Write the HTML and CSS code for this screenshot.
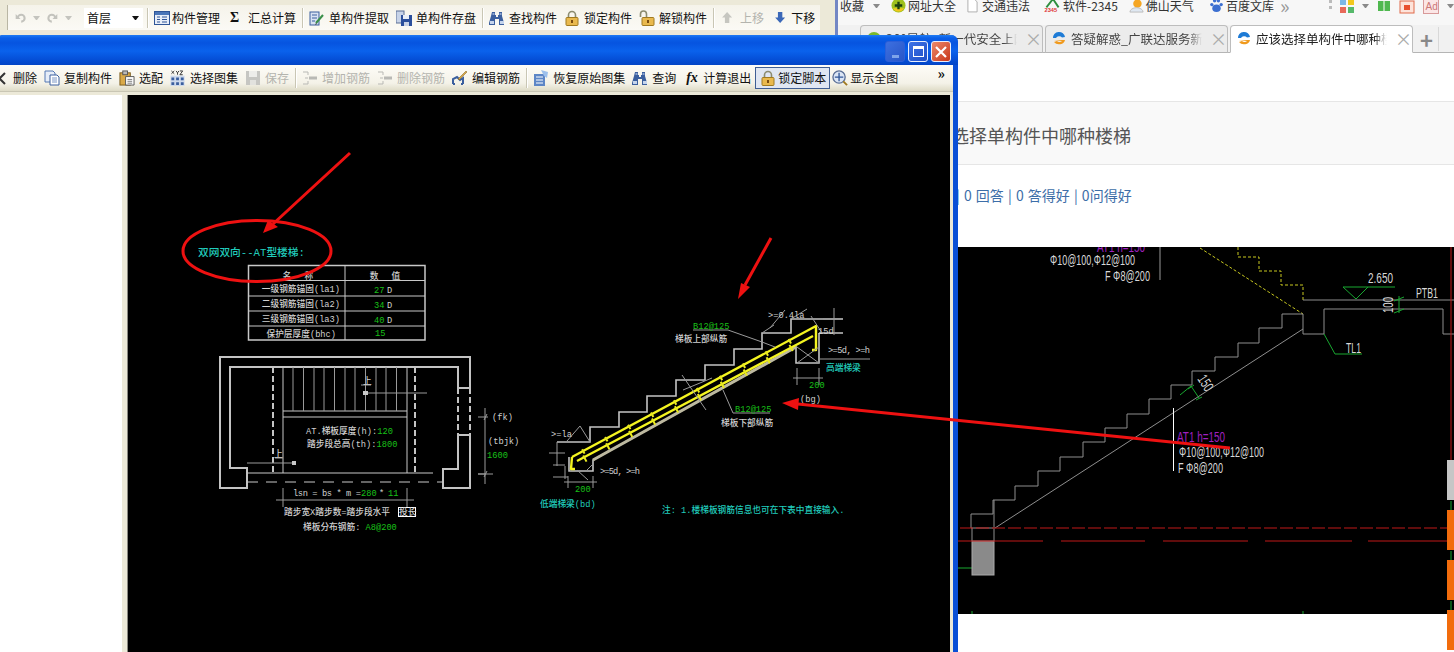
FILE: index.html
```html
<!DOCTYPE html>
<html lang="zh-CN">
<head>
<meta charset="utf-8">
<title>楼梯图集</title>
<link rel="stylesheet" href="styles.css">
</head>
<body>
<svg class="defs" aria-hidden="true">
  <defs>
    <symbol id="i-bino" viewBox="0 0 16 16"><path d="M3 2h3v3h1v2h2V5h1V2h3v4l2 7v2H10V9H6v6H0v-2l2-7z" fill="#3b5f9e"/><path d="M1 11h4v3H1zM11 11h4v3h-4z" fill="#c5d4ec"/><path d="M3.500 3h2v2h-2zM10.500 3h2v2h-2z" fill="#8aa3cf"/></symbol>
    <symbol id="i-lock" viewBox="0 0 16 16"><path d="M4.500 8V5a3.500 3.500 0 0 1 7 0v3" fill="none" stroke="#8b8b6f" stroke-width="1.600"/><rect x="2" y="7.500" width="12" height="8" rx="1" fill="#e9b94e" stroke="#a07a20"/><path d="M7 10h2v3H7z" fill="#7a4c10"/></symbol>
    <symbol id="i-unlock" viewBox="0 0 16 16"><path d="M1.500 7V4a3 3 0 0 1 6 0v3" fill="none" stroke="#8b8b6f" stroke-width="1.600"/><rect x="3" y="7.500" width="12" height="8" rx="1" fill="#e9b94e" stroke="#a07a20"/><path d="M8 10h2v3H8z" fill="#7a4c10"/></symbol>
    <symbol id="i-table" viewBox="0 0 16 16"><rect x=".5" y="1.500" width="15" height="13" fill="#e8eef8" stroke="#2f5597"/><path d="M1 2h14v3H1z" fill="#4a76b8"/><path d="M3 7h3M3 9.500h3M3 12h3M8 7h5M8 9.500h5M8 12h5" stroke="#2f5597"/></symbol>
    <symbol id="i-extract" viewBox="0 0 16 16"><rect x="1" y="2" width="9" height="13" fill="#d8e2f2" stroke="#3b5f9e"/><path d="M3 5h5M3 8h5M3 11h3" stroke="#3b5f9e"/><path d="M7 13l7-8" stroke="#3a8f4a" stroke-width="2"/><path d="M6 15l2-1-1-1z" fill="#333"/></symbol>
    <symbol id="i-store" viewBox="0 0 16 16"><rect x="0" y="1" width="8" height="12" fill="#c7d3e8" stroke="#5a6f96"/><path d="M5 5h11v11H5z" fill="#2b4f9c"/><path d="M7 5h6v4H7z" fill="#e8eef8"/><path d="M8 12h5v4H8z" fill="#c9d3e6"/></symbol>
    <symbol id="i-copy" viewBox="0 0 16 16"><path d="M1 1h8l2 2v9H1z" fill="#e6edf8" stroke="#5578b4"/><path d="M6 5h7l2 2v8H6z" fill="#fff" stroke="#3b5f9e"/><path d="M8 8h5M8 10h5M8 12h5" stroke="#7d97c6"/></symbol>
    <symbol id="i-match" viewBox="0 0 17 17"><rect x="1" y="3" width="11" height="13" fill="#d9a948" stroke="#7a5a1a"/><rect x="4" y="1" width="5" height="4" fill="#b9b9b9" stroke="#555"/><path d="M7 7h9v9H7z" fill="#fff" stroke="#555"/><path d="M9 10h5M9 12h5M9 14h5" stroke="#777"/></symbol>
    <symbol id="i-xyz" viewBox="0 0 16 17"><path d="M0 6h15v11H0z" fill="#cdd9ec"/><path d="M1 8h3v3H1zM6 8h3v3H6zM11 8h3v3h-3zM1 13h3v3H1zM6 13h3v3H6zM11 13h3v3h-3z" fill="#3b5f9e"/><path d="M1 1l3 3M4 1L1 4M6 1l1.500 2L9 1M7.500 3v2M10 1h3l-3 4h3" stroke="#333" fill="none"/></symbol>
    <symbol id="i-save" viewBox="0 0 16 16"><path d="M1 1h14v14H1z" fill="#c6c6c2"/><path d="M4 1h8v6H4z" fill="#ededea"/><path d="M5 10h6v5H5z" fill="#e2e2de"/></symbol>
    <symbol id="i-addbar" viewBox="0 0 16 16"><path d="M1 2h5v3M1 14h5v-3M3 8h3" fill="none" stroke="#b9b9b5"/><path d="M7 8h8" stroke="#b9b9b5" stroke-width="3"/></symbol>
    <symbol id="i-edit" viewBox="0 0 16 16"><path d="M1 14V9l4-2 3 3 3-2v6M1 14h2M9 14h2" fill="none" stroke="#3b5f9e" stroke-width="2"/><path d="M6 9l8-8 1 1-8 8z" fill="#d9a948" stroke="#7a5a1a" stroke-width=".5"/></symbol>
    <symbol id="i-restore" viewBox="0 0 16 16"><path d="M1 4h11v12H1z" fill="#5d86c6"/><path d="M3 7h7M3 10h7M3 13h7" stroke="#fff"/><path d="M8 0l7 2-1 6-3-2z" fill="#9dc0ec"/></symbol>
    <symbol id="i-zoom" viewBox="0 0 17 17"><circle cx="7.500" cy="7.500" r="6.500" fill="#dce6f5" stroke="#5a6f96" stroke-width="1.400"/><path d="M7.500 3v9M3 7.500h9" stroke="#2f5597" stroke-width="1.400"/><path d="M12 12l4 4" stroke="#a07a20" stroke-width="2"/></symbol>
    <symbol id="i-ie" viewBox="0 0 16 16"><path d="M2 7a6 5.500 0 0 1 12-1l-3 .5a3.500 3 0 0 0-6 .5z" fill="#1e7bd6"/><path d="M3 9h11a6 5 0 0 1-11 2l3-1a3 2.500 0 0 0 5 0z" fill="#f09a1e"/></symbol>
  </defs>
</svg>

<main class="desktop">
  <section class="app-window">
    <div class="app-bar">
      <svg class="ico w11" viewBox="0 0 16 16"><path d="M4 9a5 5 0 1 1 5 5" fill="none" stroke="#c3c3bd" stroke-width="3"/><path d="M1 3v7h7z" fill="#c3c3bd"/></svg>
      <span class="caret grey"></span>
      <svg class="ico w11 flip" viewBox="0 0 16 16"><path d="M4 9a5 5 0 1 1 5 5" fill="none" stroke="#c3c3bd" stroke-width="3"/><path d="M1 3v7h7z" fill="#c3c3bd"/></svg>
      <span class="caret grey"></span>
      <div class="combo"><span>首层</span><span class="caret dark"></span></div>
      <span class="sep"></span>
      <div class="tool tight"><svg class="ico"><use href="#i-table"/></svg><span>构件管理</span></div>
      <div class="tool wide"><span class="sigma">Σ</span><span>汇总计算</span></div>
      <span class="sep"></span>
      <div class="tool"><svg class="ico"><use href="#i-extract"/></svg><span>单构件提取</span></div>
      <div class="tool"><svg class="ico"><use href="#i-store"/></svg><span>单构件存盘</span></div>
      <span class="sep"></span>
      <div class="tool"><svg class="ico"><use href="#i-bino"/></svg><span>查找构件</span></div>
      <div class="tool"><svg class="ico"><use href="#i-lock"/></svg><span>锁定构件</span></div>
      <div class="tool"><svg class="ico"><use href="#i-unlock"/></svg><span>解锁构件</span></div>
      <span class="sep"></span>
      <div class="tool disabled wide move-up"><span class="arrow-ico up"></span><span>上移</span></div>
      <div class="tool wide move-down"><span class="arrow-ico down"></span><span>下移</span></div>
    </div>
  </section>

  <section class="browser">
    <div class="fav-bar">
      <span class="fav first">收藏</span><span class="caret grey2"></span>
      <span class="fav"><svg class="ico" viewBox="0 0 16 16"><circle cx="8" cy="8" r="7.500" fill="#9fc11e"/><path d="M2 11a7 7 0 0 0 12 0z" fill="#f2c81e"/><path d="M8 4v8M4 8h8" stroke="#1c3f10" stroke-width="2.500"/></svg>网址大全</span>
      <span class="fav"><svg class="ico doc" viewBox="0 0 12 16"><path d="M1 1h7l3 3v11H1z" fill="#fff" stroke="#aaa"/></svg>交通违法</span>
      <span class="fav soft"><svg class="ico" viewBox="0 0 17 16"><path d="M2 10L9 1l6 9" fill="none" stroke="#2f8f3f" stroke-width="2"/><text x="0" y="15" class="tiny-2345">2345</text></svg>软件-2345</span>
      <span class="fav weather"><svg class="ico" viewBox="0 0 16 16"><circle cx="9" cy="6" r="4.500" fill="#f5a623"/><path d="M1 15a6 4 0 0 1 14 0z" fill="#dfe8f2" stroke="#bbb"/></svg>佛山天气</span>
      <span class="fav last"><svg class="ico" viewBox="0 0 16 16"><ellipse cx="8" cy="11" rx="4.500" ry="4" fill="#3b6fd1"/><circle cx="3" cy="7" r="1.800" fill="#3b6fd1"/><circle cx="13" cy="7" r="1.800" fill="#3b6fd1"/><circle cx="6" cy="3" r="1.800" fill="#3b6fd1"/><circle cx="10" cy="3" r="1.800" fill="#3b6fd1"/></svg>百度文库</span>
      <span class="more">»</span>
      <div class="fav-tools">
        <span class="dots"></span>
        <svg class="ico w14" viewBox="0 0 14 14"><path d="M0 0h6v6H0z" fill="#7db8e8"/><path d="M8 0h6v6H8z" fill="#f2c81e"/><path d="M0 8h6v6H0z" fill="#e86a5a"/><path d="M8 8h6v6H8z" fill="#56b96b"/></svg>
        <span class="caret grey2"></span>
        <svg class="ico w14" viewBox="0 0 14 14"><path d="M1 2h12v10H1z" fill="#4fb84f"/><path d="M7 2v10" stroke="#fff"/></svg>
        <svg class="ico" viewBox="0 0 16 16"><rect x="1" y="3" width="14" height="12" fill="#fde3da" stroke="#e06a4a"/><rect x="5" y="7" width="6" height="5" fill="#e8502f"/></svg>
        <svg class="ico" viewBox="0 0 16 16"><rect x=".5" y="1.500" width="15" height="14" fill="#fbe6e6" stroke="#d89a9a"/><text x="2.500" y="12" class="tiny-ad">Ad</text></svg>
        <span class="caret grey2"></span>
      </div>
    </div>
    <div class="tab-strip">
      <div class="tab"><svg class="ico" viewBox="0 0 16 16"><circle cx="8" cy="8" r="7" fill="#79b82a"/><circle cx="8" cy="8" r="3.500" fill="#f2c81e"/></svg><span class="tab-label">360导航_新一代安全上网导航</span><span class="tab-x">×</span></div>
      <div class="tab"><svg class="ico"><use href="#i-ie"/></svg><span class="tab-label">答疑解惑_广联达服务新手</span><span class="tab-x">×</span></div>
      <div class="tab active"><svg class="ico"><use href="#i-ie"/></svg><span class="tab-label">应该选择单构件中哪种楼梯</span><span class="tab-x">×</span></div>
      <span class="tab-plus">+</span>
      <span class="tab-divider"></span>
    </div>
    <div class="page">
      <h1 class="q-title">应该选择单构件中哪种楼梯</h1>
      <p class="q-stats">1 提问 | 0 回答 | 0 答得好 | 0问得好</p>
      <svg class="shot" viewBox="838 246 616 367" role="img" aria-label="楼梯结构施工图">
        <rect x="838" y="246" width="616" height="367" class="bg-black"/>
        <path d="M1238 246v10h21v14h22v14h22v15" class="l-yellow dash"/>
        <path d="M1200 247l103 66" class="l-yellow dash"/>
        <path d="M1303 299h151M1303 313h-21v14h-23v15h-21v14h-23v14h-23v14h-21v14h-22v15h-22v14h-22v14h-22v15h-23v14h-22v15h-23v14h-22v14h-22v14h22M994 499v41M972 527v13" class="l-grey"/>
        <path d="M995 527l308-199M1303 313v20h21v-25h119v25h11" class="l-grey"/>
        <path d="M1160 246v33" class="l-mid"/>
        <path d="M1173.500 407v63" class="l-white"/>
        <path d="M1343 286h52M1343 286l13 12 12-12" class="l-green"/>
        <path d="M1399 295v17M1394 300l10-4M1394 312l10-4" class="l-green"/>
        <path d="M1324 333l11 20h27" class="l-green"/>
        <path d="M1180 394l11-9 8 12M1188 388l6-4M1196 399l6-3" class="l-green"/>
        <path d="M958 567h15" class="l-green"/>
        <path d="M972 610v3M1303 610v3" class="l-green"/>
        <path d="M1451 246v214" class="l-red"/>
        <path d="M1451 500v10M1451 550v10M1451 600v13" class="l-green"/>
        <rect x="972" y="540" width="22" height="34" class="block"/>
        <path d="M960 527h487" class="l-red dash-long"/>
        <path d="M958 540h85M1061 540h84M1163 540h85M1265 540h87M1368 540h79" class="l-red"/>
        <text x="1097" y="251" class="cad-n purple" textLength="48" lengthAdjust="spacingAndGlyphs">AT1 h=150</text>
        <text x="1050" y="264" class="cad-n" textLength="85" lengthAdjust="spacingAndGlyphs">Φ10@100,Φ12@100</text>
        <text x="1105" y="280" class="cad-n" textLength="45" lengthAdjust="spacingAndGlyphs">F Φ8@200</text>
        <text x="1177" y="441" class="cad-n purple" textLength="48" lengthAdjust="spacingAndGlyphs">AT1 h=150</text>
        <text x="1179" y="456" class="cad-n" textLength="85" lengthAdjust="spacingAndGlyphs">Φ10@100,Φ12@100</text>
        <text x="1178" y="472" class="cad-n" textLength="45" lengthAdjust="spacingAndGlyphs">F Φ8@200</text>
        <text x="1368" y="282" class="cad-n" textLength="25" lengthAdjust="spacingAndGlyphs">2.650</text>
        <text x="1416" y="297" class="cad-n" textLength="22" lengthAdjust="spacingAndGlyphs">PTB1</text>
        <text x="1346" y="352" class="cad-n" textLength="15" lengthAdjust="spacingAndGlyphs">TL1</text>
        <text class="cad-n" transform="translate(1393 312) rotate(-90)" textLength="16" lengthAdjust="spacingAndGlyphs">100</text>
        <text class="cad-n" transform="translate(1197 378) rotate(57)" textLength="16" lengthAdjust="spacingAndGlyphs">150</text>
      </svg>
    </div>
    <div class="side-rail">
      <span class="rail-block grey"></span>
      <span class="rail-block"></span>
      <span class="rail-block"></span>
      <span class="rail-block"></span>
    </div>
  </section>

  <section class="dialog">
    <header class="titlebar">
      <button class="win-btn min"><span class="min-bar"></span></button>
      <button class="win-btn max"><span class="max-box"></span></button>
      <button class="win-btn close">
        <svg viewBox="0 0 12 12" class="close-x"><path d="M1 1l10 10M11 1L1 11"/></svg>
      </button>
    </header>
    <div class="dialog-inner">
      <div class="dlg-bar">
        <div class="tool clip"><svg class="ico" viewBox="0 0 16 16"><path d="M1 3l11 11M12 3L1 14" stroke="#333" stroke-width="2"/></svg><span>删除</span></div>
        <div class="tool"><svg class="ico"><use href="#i-copy"/></svg><span>复制构件</span></div>
        <div class="tool"><svg class="ico"><use href="#i-match"/></svg><span>选配</span></div>
        <div class="tool"><svg class="ico"><use href="#i-xyz"/></svg><span>选择图集</span></div>
        <div class="tool disabled"><svg class="ico"><use href="#i-save"/></svg><span>保存</span></div>
        <span class="sep"></span>
        <div class="tool disabled"><svg class="ico"><use href="#i-addbar"/></svg><span>增加钢筋</span></div>
        <div class="tool disabled"><svg class="ico"><use href="#i-addbar"/></svg><span>删除钢筋</span></div>
        <div class="tool"><svg class="ico"><use href="#i-edit"/></svg><span>编辑钢筋</span></div>
        <span class="sep"></span>
        <div class="tool"><svg class="ico"><use href="#i-restore"/></svg><span>恢复原始图集</span></div>
        <div class="tool"><svg class="ico"><use href="#i-bino"/></svg><span>查询</span></div>
        <div class="tool"><span class="fx">fx</span><span>计算退出</span></div>
        <div class="tool pressed"><svg class="ico"><use href="#i-lock"/></svg><span>锁定脚本</span></div>
        <div class="tool tight"><svg class="ico"><use href="#i-zoom"/></svg><span>显示全图</span></div>
        <span class="chevrons">»</span>
      </div>
      <div class="dlg-body">
        <aside class="tree"></aside>
        <div class="canvas">
          <svg class="cad" viewBox="128 95 822 557" role="img" aria-label="AT型楼梯配筋图">
            <text x="198" y="256" class="cad-t cyan big">双网双向--AT型楼梯:</text>
            <rect x="248.500" y="265.500" width="176.500" height="74.500" class="t-frame"/>
            <path d="M248 280.500h177M248 296h177M248 311h177M248 326h177M345 265v75" class="l-light"/>
            <text x="298" y="279" class="cad-t mid spread">名 称</text>
            <text x="385" y="279" class="cad-t mid spread">数 值</text>
            <text x="340" y="292" class="cad-t end">一级钢筋锚固(la1)</text>
            <text x="340" y="307" class="cad-t end">二级钢筋锚固(la2)</text>
            <text x="340" y="322" class="cad-t end">三级钢筋锚固(la3)</text>
            <text x="336" y="337" class="cad-t end">保护层厚度(bhc)</text>
            <text x="374" y="293" class="cad-t green">27</text><text x="387" y="293" class="cad-t">D</text>
            <text x="374" y="308" class="cad-t green">34</text><text x="387" y="308" class="cad-t">D</text>
            <text x="374" y="323" class="cad-t green">40</text><text x="387" y="323" class="cad-t">D</text>
            <text x="375" y="336" class="cad-t green">15</text>
            <path d="M458 388v-21H230v101h17v20h-27V357h250v31h-12M458 435v34h-15v19h27v-53z" class="l-wall"/>
            <path d="M458 388v47M470 388v47" class="l-wall dash-wall"/>
            <path d="M273 367v106M415 367v106" class="l-wall dash-wall"/>
            <path d="M283 367v106M407 367v106M283 411h124M283 417h124M247 473h186" class="l-light"/>
            <path d="M293 367v44M303.500 367v44M314 367v44M324 367v44M334.500 367v44M345 367v44M355 367v44M365.500 367v44M376 367v44M386 367v44M396.500 367v44" class="l-mid"/>
            <path d="M247 482h196" class="l-light dash-mid"/>
            <path d="M366 393h61M247 463h49M361 385h10M275 458h8" class="l-mid"/>
            <path d="M363 391h5v4h-5zM292 461h4v4h-4z" class="fill-light"/>
            <text x="363" y="384" class="cad-t">上</text>
            <text x="274" y="457" class="cad-t">上</text>
            <path d="M485 408v76M478 417h10M485 474h-7h15M484 420l3-6M484 477l3-6" class="l-mid"/>
            <text x="492" y="420" class="cad-t">(fk)</text>
            <text x="488" y="444" class="cad-t">(tbjk)</text>
            <text x="487" y="458" class="cad-t green">1600</text>
            <text x="306" y="434" class="cad-t">AT.梯板厚度(h):<tspan class="green">120</tspan></text>
            <text x="307" y="447" class="cad-t">踏步段总高(th):<tspan class="green">1800</tspan></text>
            <text x="293" y="496" class="cad-t" textLength="68">lsn = bs * m =</text>
            <text x="361" y="496" class="cad-t green">280</text>
            <text x="379" y="496" class="cad-t">*</text>
            <text x="388" y="496" class="cad-t green">11</text>
            <path d="M276 500h138M283 488v19M407 488v19" class="l-mid"/>
            <text x="284" y="515" class="cad-t">踏步宽X踏步数=踏步段水平</text>
            <rect x="398.500" y="507.500" width="17" height="9" class="box"/>
            <text x="399" y="515" class="cad-t">投长</text>
            <text x="303" y="530" class="cad-t">梯板分布钢筋:<tspan class="green"> A8@200</tspan></text>
            <path d="M557 442h33v-15h29v-15h28v-16h29v-16h29v-15h29v-16h28v-16h29v-14h52M819 333h24" class="l-wall thin"/>
            <path d="M569 457v14h24v-11l203-113v16h23v-30" class="l-wall thin"/>
            <path d="M593 460l203-113" class="l-beige"/>
            <path d="M572 457l244-131v24h-4M577 461l236-125M572 457l-1 12h4" class="rebar"/>
            <path d="M584 459l222-119" class="rebar-ticks"/>
            <path d="M571 458l240-128" class="rebar-ticks off"/>
            <path d="M728 330l34 12 13 5M723 390l10 23h37M693 330h35" class="l-mid"/>
            <path d="M683 390l29-12M682 375l24 35" class="l-mid"/>
            <path d="M762 333l12-8M785 310l-15 18M791 319l16-10M811 316l11 17M834 308v27M823 319h20M797 347l22 16M797 363l22-16M819 359h51" class="l-mid"/>
            <path d="M557 442v24M549 453h16M553 465h12M553 477h15M565 466v13M567 441l13-15 10 16" class="l-mid"/>
            <path d="M793 378h30M797 368v17M819 368v17M564 482h33M568 476v12M593 476v12M593 464l-6 6M577 470l11 10" class="l-mid"/>
            <text x="693" y="329" class="cad-t green">B12@125</text>
            <text x="675" y="342" class="cad-t">梯板上部纵筋</text>
            <text x="735" y="412" class="cad-t green">B12@125</text>
            <text x="721" y="426" class="cad-t">梯板下部纵筋</text>
            <text x="768" y="318" class="cad-t">&gt;=0.4la</text>
            <text x="818" y="334" class="cad-t">15d</text>
            <text x="828" y="353" class="cad-t" textLength="42">&gt;=5d, &gt;=h</text>
            <text x="826" y="371" class="cad-t cyan">高端梯梁</text>
            <text x="809" y="388" class="cad-t green">200</text>
            <text x="800" y="402" class="cad-t">(bg)</text>
            <text x="551" y="437" class="cad-t">&gt;=la</text>
            <text x="600" y="474" class="cad-t" textLength="40">&gt;=5d, &gt;=h</text>
            <text x="575" y="492" class="cad-t green">200</text>
            <text x="540" y="507" class="cad-t cyan">低端梯梁(bd)</text>
            <text x="662" y="513" class="cad-t cyan">注: 1.楼梯板钢筋信息也可在下表中直接输入.</text>
          </svg>
        </div>
      </div>
    </div>
  </section>

  <svg class="annotations" viewBox="0 0 1454 652" aria-hidden="true">
    <ellipse cx="257" cy="251" rx="74" ry="30.500" class="a-line"/>
    <path d="M350 153l-77 71M771 238l-26 47M1230 448l-432-44" class="a-line"/>
    <path d="M263 233l5-13 10 7zM738 299l3-16 9 4zM782 403l17-5-1 12z" class="a-head"/>
  </svg>
</main>
</body>
</html>
```

FILE: styles.css
```css
* { box-sizing: border-box; }
html, body { margin: 0; height: 100%; }
body {
  overflow: hidden;
  background: #fff;
  font-family: "Noto Sans CJK SC", "Liberation Sans", sans-serif;
  font-size: 12px;
  color: #111;
}
.defs { position: absolute; width: 0; height: 0; }
.desktop { position: relative; width: 1454px; height: 652px; overflow: hidden; }

/* shared toolbar parts */
.ico { flex: none; width: 16px; height: 16px; display: block; }
.w11 { width: 11px; height: 13px; }
.w14 { width: 14px; height: 14px; }
.flip { transform: scaleX(-1); }
.tool { display: flex; align-items: center; gap: 4px; flex: none; white-space: nowrap; line-height: 16px; }
.tool.tight { gap: 2px; }
.tool.wide { gap: 8px; }
.tool.disabled { color: #b4b4ae; }
.sep { flex: none; width: 1px; height: 20px; margin: 0 -1px; background: #c9c6b4; box-shadow: 1px 0 #fff; }
.caret { flex: none; box-sizing: content-box; width: 1px; height: 0; border: 3px solid transparent; border-bottom: 0; border-top: 4px solid #555; }
.caret.grey { border-top-color: #c4c4be; }
.caret.grey2 { border-top-color: #8a8a8a; }
.caret.dark { border-top-color: #111; }

/* application window */
.app-window {
  position: absolute; left: 0; top: 0; width: 835px; height: 36px;
  background: #ece9d8;
  padding-top: 5px;
}
.app-bar {
  margin-left: 7px; width: 813px; height: 25px;
  background: linear-gradient(#f5f3ea, #fbfaf5);
  border-left: 1px solid #b9b6a4;
  display: flex; align-items: center; gap: 7px; padding-left: 7px;
}
.combo { flex: none; width: 59px; height: 20px; margin: 0 -2px 0 5px; background: #fff; display: flex; align-items: center; justify-content: space-between; padding: 0 4px 0 3px; }
.sigma { font-family: "Liberation Serif", serif; font-weight: 700; font-size: 14px; width: 13px; padding-left: 3px; }
.arrow-ico { width: 10px; height: 11px; background: #3b68b8; clip-path: polygon(50% 100%, 100% 50%, 72% 50%, 72% 0, 28% 0, 28% 50%, 0 50%); }
.arrow-ico.up { background: #c6c6c0; transform: scaleY(-1); }
.move-up { margin-left: 2px; }
.tool.move-down { margin-left: 4px; gap: 6px; }

/* browser */
.browser {
  position: absolute; left: 835px; top: 0; width: 619px; height: 652px;
  background: #fff;
  border-left: 3px solid #7286c4;
  display: flex; flex-direction: column;
}
.fav-bar { height: 25px; flex: none; background: #f7f7f7; display: flex; align-items: center; padding: 0 0 14px 2px; color: #333; }
.fav { display: flex; align-items: center; gap: 2px; flex: none; margin-right: 11px; line-height: 12px; }
.fav.first { margin-right: 9px; }
.fav.soft { margin-left: 3px; margin-right: 11px; }
.fav.weather { margin-right: 15px; }
.fav.last { margin-right: 6px; }
.fav-bar > .caret { margin-right: 11px; }
.fav .ico { width: 15px; height: 15px; }
.fav .doc { width: 11px; margin-right: 2px; }
.fav.soft .ico { width: 17px; }
.tiny-2345 { font: 700 6px "Liberation Sans", sans-serif; fill: #d33; }
.tiny-ad { font: 10px "Liberation Sans", sans-serif; fill: #c77; }
.more { flex: none; width: 12px; color: #999; font-size: 20px; line-height: 10px; }
.fav-tools { display: flex; align-items: center; gap: 8px; margin-left: 37px; }
.dots { width: 3px; height: 12px; background: repeating-linear-gradient(#bbb 0 3px, transparent 3px 6px); }

.tab-strip { height: 28px; flex: none; background: #f1f1f1; border-bottom: 1px solid #b5b5b5; display: flex; align-items: flex-end; padding-left: 22px; gap: 2px; }
.tab { position: relative; top: 1px; width: 183px; height: 28px; display: flex; align-items: center; gap: 4px; padding: 0 5px; background: #ececec; border: 1px solid #bdbdbd; border-bottom: 1px solid #b5b5b5; border-radius: 4px 4px 0 0; color: #444; }
.tab .tab-label { flex: 1; min-width: 0; overflow: hidden; white-space: nowrap; -webkit-mask-image: linear-gradient(90deg, #000 90%, transparent); mask-image: linear-gradient(90deg, #000 90%, transparent); line-height: 14px; font-size: 12.500px; }
.tab-x { flex: none; color: #aaa; font-size: 17px; line-height: 14px; width: 12px; margin-left: 4px; text-align: center; }
.tab.active { background: #fff; border-bottom-color: #fff; color: #222; }
.tab-plus { color: #888; font-size: 22px; line-height: 25px; margin-left: 5px; font-weight: 600; }
.tab-divider { width: 1px; height: 24px; margin-left: 3px; margin-bottom: 1px; background: #d8d8d8; }

.page { flex: 1; display: flex; flex-direction: column; padding-top: 48px; }
.q-title { margin: 0; height: 64px; line-height: 67px; background: #f9f9f9; border-top: 1px solid #e6e6e6; border-bottom: 1px solid #e6e6e6; padding-left: 77px; font-size: 18px; font-weight: 400; color: #555; }
.q-stats { margin: 0; height: 82px; padding: 20px 0 0 74px; font-size: 14px; line-height: 20px; word-spacing: 1px; color: #3d6ea8; }
.shot { display: block; width: 616px; height: 367px; }
.side-rail { position: absolute; right: 0; top: 460px; width: 7px; display: flex; flex-direction: column; gap: 10px; }
.rail-block { display: block; height: 40px; background: #f26c0c; }
.rail-block.grey { background: #c6c6c6; }

/* dialog */
.dialog {
  position: absolute; left: -4px; top: 35px; width: 962px; height: 620px;
  background: #0a4fd6;
  border-radius: 7px 7px 0 0;
  padding: 0 5px 0 4px;
  display: flex; flex-direction: column;
}
.titlebar {
  flex: none; height: 30px; margin: 0 -5px 0 -4px; padding: 6px 7px 0 0;
  border-radius: 7px 7px 0 0;
  background: linear-gradient(#1f7cf4 0, #0a5fe8 3px, #0654e0 8px, #0a62ec 16px, #0550d8 24px, #0345c6 100%);
  display: flex; justify-content: flex-end; gap: 3px;
}
.win-btn { width: 20px; height: 21px; padding: 0; border: 1px solid #e8eefc; border-radius: 3px; background: linear-gradient(135deg, #3f74e6, #1f4fc8); display: flex; align-items: center; justify-content: center; }
.min { background: linear-gradient(135deg, #3d70e0, #2855c8); border-color: #2c5fd8; align-items: flex-end; padding-bottom: 3px; }
.min-bar { width: 7px; height: 3px; background: #7fa4ea; }
.max-box { width: 11px; height: 11px; border: 1px solid #fff; border-top-width: 3px; }
.close { background: linear-gradient(135deg, #ec8a6a, #c8361a); }
.close-x { width: 12px; height: 12px; fill: none; stroke: #fff; stroke-width: 2.200; }

.dialog-inner { flex: 1; min-height: 0; background: #ece9d8; display: flex; flex-direction: column; }
.dlg-bar {
  flex: none; height: 27px; display: flex; align-items: center; gap: 7px; position: relative;
  background: linear-gradient(#fdfcf7, #f4f2e8 70%, #dedbc6);
  border-bottom: 1px solid #c9c6b4;
}
.tool.clip { margin-left: -7px; }
.fx { font-family: "Liberation Serif", serif; font-style: italic; font-weight: 700; font-size: 14px; width: 16px; padding-left: 3px; line-height: 14px; }
.tool.pressed { margin: 0 -5px 0 -3px; height: 22px; gap: 2px; padding: 0 3px 0 4px; border: 1px solid #3f5e94; background: #dfe6f2; }
.chevrons { position: absolute; right: 8px; top: 1px; font-size: 14px; line-height: 14px; font-weight: 700; }
.dlg-body { flex: 1; min-height: 0; padding-top: 3px; display: flex; }
.tree { flex: none; width: 122px; background: #fff; }
.canvas { flex: none; width: 824px; margin-left: 5px; border-left: 1px solid #8a8880; }
.cad { display: block; width: 822px; height: 557px; background: #000; }

/* drawing styles */
.bg-black { fill: #000; }
.cad-t { font-family: "Liberation Mono", "Noto Sans CJK SC", monospace; font-size: 8.700px; font-weight: 500; fill: #d0d0d0; }
.cad-n { font-family: "Liberation Sans Narrow", "Liberation Sans", sans-serif; font-size: 15px; fill: #d8d8d8; }
.purple { fill: #a020c0; }
.cyan { fill: #20ccbc; }
.big { font-size: 10.700px; }
.green { fill: #18c018; }
.mid { text-anchor: middle; }
.end { text-anchor: end; }
.spread { word-spacing: 8px; }
.t-frame, .box { fill: none; stroke: #c8c8c8; }
.t-frame { stroke-width: 1.500; }
.box { stroke: #fff; }
.l-light { fill: none; stroke: #c8c8c8; stroke-width: 1; }
.l-mid { fill: none; stroke: #9a9a9a; stroke-width: 1; }
.l-grey { fill: none; stroke: #8e8e8e; stroke-width: 1; }
.l-white { fill: none; stroke: #fff; stroke-width: 1; }
.l-green { fill: none; stroke: #18a830; stroke-width: 1; }
.l-red { fill: none; stroke: #c01818; stroke-width: 1; }
.l-yellow { fill: none; stroke: #c8c820; stroke-width: 1; }
.l-wall { fill: none; stroke: #c4c4c4; stroke-width: 2; }
.l-wall.thin { stroke-width: 1.600; }
.l-beige { fill: none; stroke: #bdb9a0; stroke-width: 3; }
.dash { stroke-dasharray: 3 2; }
.dash-long { stroke-dasharray: 13 3; }
.dash-wall { stroke-dasharray: 6 3; }
.dash-mid { stroke-dasharray: 11 8; }
.fill-light { fill: #c8c8c8; }
.rebar { fill: none; stroke: #f4f420; stroke-width: 2.400; stroke-linejoin: round; }
.rebar-ticks { fill: none; stroke: #e8e820; stroke-width: 7; stroke-dasharray: 2 24; }
.rebar-ticks.off { stroke-width: 5; stroke-dashoffset: -13; }
.block { fill: #8a8a8a; stroke: #aaa; }

/* annotations */
.annotations { position: absolute; left: 0; top: 0; width: 1454px; height: 652px; pointer-events: none; }
.a-line { fill: none; stroke: #ee1111; stroke-width: 3; }
.a-head { fill: #ee1111; }
```
